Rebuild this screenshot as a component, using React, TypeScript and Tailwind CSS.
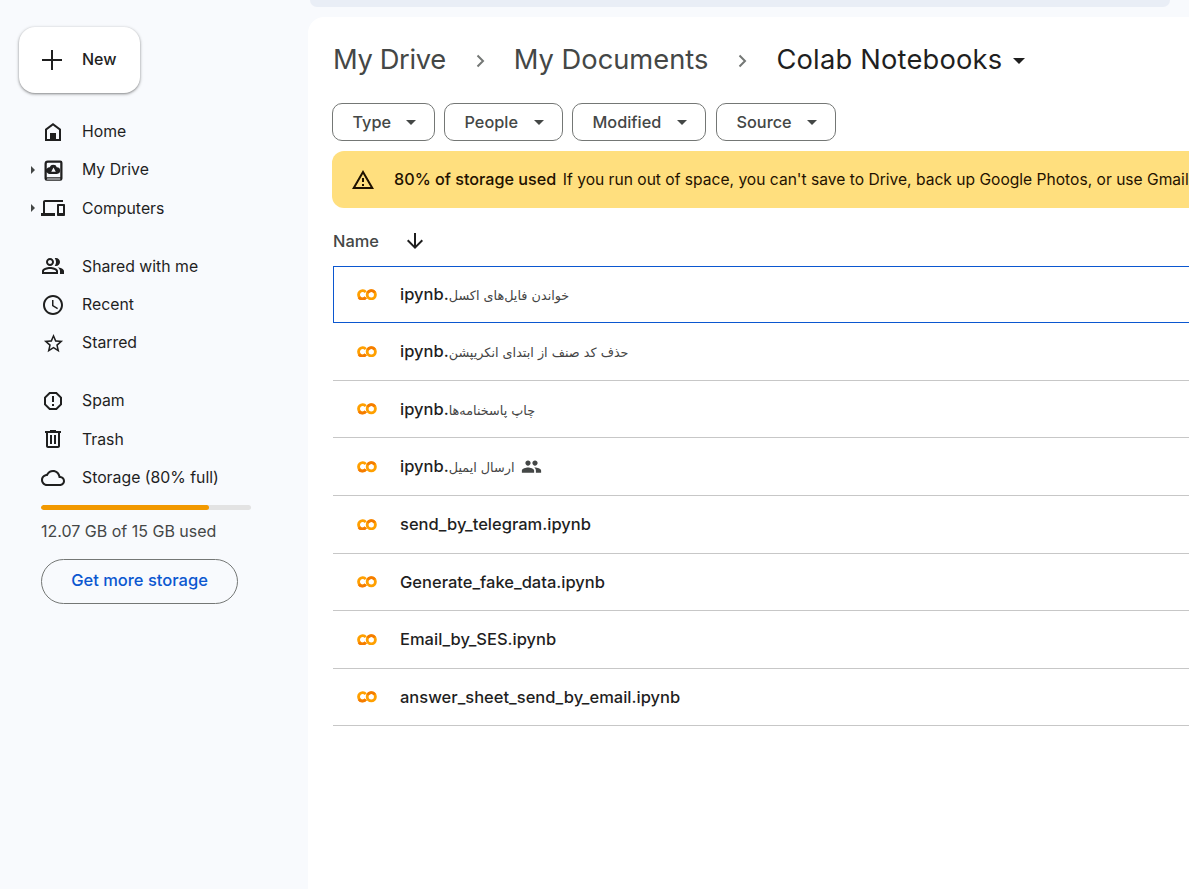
import React from "react";

const I = ({ d, s = 24, cls = "" }: { d: string; s?: number; cls?: string }) => (
  <svg width={s} height={s} viewBox="0 0 24 24" fill="currentColor" className={cls}>
    <path d={d} />
  </svg>
);

const home = "M12 3 4 9v12h16V9l-8-6zm6 16h-3v-6H9v6H6v-9l6-4.5 6 4.5v9z";
const drive = "M7 3h11a2 2 0 0 1 2 2v14a2 2 0 0 1-2 2H6a2 2 0 0 1-2-2V6a3 3 0 0 1 3-3zm-1 15.2c.3-.1.6-.2 1-.2h11V5H7a1 1 0 0 0-1 1v12.2zM7 19.9h11V19H7c-.6 0-.9.4-1 .9h1zM12 7a3 3 0 0 1 2.9 2.2A2.9 2.9 0 0 1 15 15H9a3 3 0 0 1-.4-6A3.4 3.4 0 0 1 12 7zm0 2.4L10 13h4l-2-3.6z";
const computers = "M4 6h18V4H4c-1.1 0-2 .9-2 2v11H0v3h14v-3H4V6zm19 2h-6c-.55 0-1 .45-1 1v10c0 .55.45 1 1 1h6c.55 0 1-.45 1-1V9c0-.55-.45-1-1-1zm-1 9h-4v-7h4v7z";
const shared = "M16.67 13.13C18.04 14.06 19 15.32 19 17v3h4v-3c0-2.18-3.57-3.47-6.33-3.87zM15 12c2.21 0 4-1.79 4-4s-1.79-4-4-4c-.47 0-.91.1-1.33.24C14.5 5.27 15 6.58 15 8s-.5 2.73-1.33 3.76c.42.14.86.24 1.33.24zM9 12c2.21 0 4-1.79 4-4s-1.79-4-4-4-4 1.79-4 4 1.79 4 4 4zm0-6c1.1 0 2 .9 2 2s-.9 2-2 2-2-.9-2-2 .9-2 2-2zM9 13c-2.67 0-8 1.34-8 4v3h16v-3c0-2.66-5.33-4-8-4zm6 5H3v-.99C3.2 16.29 6.3 15 9 15s5.8 1.29 6 2v1z";
const recent = "M11.99 2C6.47 2 2 6.48 2 12s4.47 10 9.99 10C17.52 22 22 17.52 22 12S17.52 2 11.99 2zM12 20c-4.42 0-8-3.58-8-8s3.58-8 8-8 8 3.58 8 8-3.58 8-8 8zm.5-13H11v6l5.25 3.15.75-1.23-4.5-2.67V7z";
const star = "M22 9.24l-7.19-.62L12 2 9.19 8.63 2 9.24l5.46 4.73L5.82 21 12 17.27 18.18 21l-1.63-7.03L22 9.24zM12 15.4l-3.76 2.27 1-4.28-3.32-2.88 4.38-.38L12 6.1l1.71 4.04 4.38.38-3.32 2.88 1 4.28L12 15.4z";
const spam = "M15.73 3H8.27L3 8.27v7.46L8.27 21h7.46L21 15.73V8.27L15.73 3zM19 14.9L14.9 19H9.1L5 14.9V9.1L9.1 5h5.8L19 9.1v5.8zM11 7h2v6h-2zM11 15h2v2h-2z";
const trash = "M15 4V3H9v1H4v2h1v13c0 1.1.9 2 2 2h10c1.1 0 2-.9 2-2V6h1V4h-5zm2 15H7V6h10v13zM9 8h2v9H9zm4 0h2v9h-2z";
const cloud = "M19.35 10.04C18.67 6.59 15.64 4 12 4 9.11 4 6.6 5.64 5.35 8.04 2.34 8.36 0 10.91 0 14c0 3.31 2.69 6 6 6h13c2.76 0 5-2.24 5-5 0-2.64-2.05-4.78-4.65-4.96zM19 18H6c-2.21 0-4-1.79-4-4 0-2.05 1.53-3.76 3.56-3.97l1.07-.11.5-.95C8.08 7.14 9.94 6 12 6c2.62 0 4.88 1.86 5.39 4.43l.3 1.5 1.53.11c1.56.1 2.78 1.41 2.78 2.96 0 1.65-1.35 3-3 3z";
const warn = "M1 21h22L12 2 1 21zm3.47-2L12 5.99 19.53 19H4.47zM11 16h2v2h-2zM11 10h2v4h-2z";
const people = "M16 11c1.66 0 2.99-1.34 2.99-3S17.66 5 16 5c-1.66 0-3 1.34-3 3s1.34 3 3 3zm-8 0c1.66 0 2.99-1.34 2.99-3S9.66 5 8 5C6.34 5 5 6.34 5 8s1.34 3 3 3zm0 2c-2.33 0-7 1.17-7 3.5V19h14v-2.5c0-2.33-4.67-3.5-7-3.5zm8 0c-.29 0-.62.02-.97.05 1.16.84 1.97 1.97 1.97 3.45V19h6v-2.5c0-2.33-4.67-3.5-7-3.5z";

const Caret = ({ cls = "" }: { cls?: string }) => (
  <svg width="10" height="5" viewBox="0 0 10 5" fill="currentColor" className={cls}>
    <path d="M0 0h10L5 5z" />
  </svg>
);

const Colab = () => (
  <svg width="20" height="11.5" viewBox="0 0 21 12" fill="none" strokeWidth="3">
    <path d="M9.2 3.2A4.3 4.3 0 1 0 9.2 8.8" stroke="#ffa000" />
    <circle cx="15" cy="6" r="4.3" stroke="#ffa000" />
    <path d="M11.2 4A4.3 4.3 0 0 1 18.6 3.6" stroke="#f57c00" />
    <path d="M2 8.6A4.3 4.3 0 0 0 9.2 8.8" stroke="#f57c00" />
  </svg>
);

const NavItem = ({ d, label, size = 24, arrow = false }: { d: string; label: string; size?: number; arrow?: boolean }) => (
  <div className="flex items-center h-[38.4px]">
    <div className="w-[11px] ml-[31px] flex items-center">
      {arrow && (
        <svg width="4" height="8" viewBox="0 0 4 8" fill="#444746"><path d="M0 0l4 4-4 4z" /></svg>
      )}
    </div>
    <div className="w-[24px] flex justify-center -ml-[1px] mr-[17px] text-[#1f1f1f]">
      <I d={d} s={size} cls="shrink-0" />
    </div>
    <span className="text-[15.8px] text-[#1f1f1f]">{label}</span>
  </div>
);

const Chip = ({ label, w }: { label: string; w: string }) => (
  <div className={`${w} h-[38px] rounded-[10px] border border-[#747775] flex items-center justify-between pl-[19.5px] pr-[18px] text-[#444746]`}>
    <span className="text-[16.3px] font-medium">{label}</span>
    <Caret />
  </div>
);

const Row = ({ ltr, fa, shared: sh, selected }: { ltr?: string; fa?: string; shared?: boolean; selected?: boolean }) => (
  <div className={`flex items-center w-[1000px] ${selected ? "h-[57.3px] border border-[#0b57d0] pl-[23px]" : "h-[57.6px] border-b border-[#c7c7c7] pl-[24px]"}`}>
    <div className="w-[43px] shrink-0 flex"><Colab /></div>
    {ltr ? (
      <span className="text-[16.5px] font-medium text-[#1f1f1f]">{ltr}</span>
    ) : (
      <span dir="rtl" className="text-[16.5px] font-medium text-[#1f1f1f]">
        <span className="font-normal text-[12.8px] text-[#444]" style={{ fontFamily: "'DejaVu Sans', sans-serif" }}>{fa}</span>.ipynb
      </span>
    )}
    {sh && <I d={people} s={21} cls="ml-[7px] text-[#444746]" />}
  </div>
);

export default function App() {
  return (
    <div className="w-[1189px] h-[889px] overflow-hidden flex bg-[#f8fafd]" style={{ fontFamily: "Inter, Roboto, sans-serif" }}>
      <aside className="w-[308px] shrink-0 flex flex-col">
        <div className="ml-[19px] mt-[27px] w-[121px] h-[66px] rounded-[16px] bg-white shadow-[0_1px_3px_1px_rgba(0,0,0,0.15),0_1px_2px_rgba(0,0,0,0.3)] flex items-center pl-[21px]">
          <svg width="24" height="24" viewBox="0 0 24 24" fill="#1f1f1f"><path d="M11 2h2v9h9v2h-9v9h-2v-9H2v-2h9z" /></svg>
          <span className="ml-[18px] mb-[2px] text-[16px] font-medium text-[#1f1f1f]">New</span>
        </div>
        <div className="mt-[19.5px]">
          <NavItem d={home} label="Home" />
          <NavItem d={drive} label="My Drive" size={27} arrow />
          <NavItem d={computers} label="Computers" arrow />
        </div>
        <div className="mt-[19.5px]">
          <NavItem d={shared} label="Shared with me" />
          <NavItem d={recent} label="Recent" />
          <NavItem d={star} label="Starred" size={23} />
        </div>
        <div className="mt-[19.5px]">
          <NavItem d={spam} label="Spam" />
          <NavItem d={trash} label="Trash" />
          <NavItem d={cloud} label="Storage (80% full)" />
        </div>
        <div className="ml-[41px] mt-[8px] w-[210px] h-[5px] rounded-full bg-[#e3e3e3] overflow-hidden">
          <div className="w-[168px] h-full rounded-full bg-[#f29900]" />
        </div>
        <div className="ml-[41px] mt-[11px] text-[16px] text-[#444746] leading-[20px]">12.07 GB of 15 GB used</div>
        <div className="ml-[41px] mt-[18px] w-[197px] h-[45px] rounded-full border border-[#747775] flex items-center justify-center text-[16.5px] font-medium text-[#0b57d0] pb-[2px]">
          Get more storage
        </div>
      </aside>

      <div className="flex-1 min-w-0 flex flex-col">
        <div className="h-[7px] mr-[19px] ml-[2px] bg-[#e9eef6] rounded-b-[14px]" />
        <div className="h-[10px]" />
        <main className="flex-1 bg-white rounded-tl-[16px] pl-[24px] min-w-0 overflow-hidden">
          <div className="flex items-center h-[72px] pt-[15px] pl-[1px] text-[27.3px] whitespace-nowrap">
            <span className="text-[#444746] tracking-[-0.35px]">My Drive</span>
            <svg width="24" height="24" viewBox="0 0 24 24" fill="none" stroke="#747775" strokeWidth="2" className="ml-[22px] mr-[22px]"><path d="M9.5 6.5 15 12l-5.5 5.5" /></svg>
            <span className="text-[#444746]">My Documents</span>
            <svg width="24" height="24" viewBox="0 0 24 24" fill="none" stroke="#747775" strokeWidth="2" className="ml-[22px] mr-[22px]"><path d="M9.5 6.5 15 12l-5.5 5.5" /></svg>
            <span className="text-[#1f1f1f] tracking-[0.2px]">Colab Notebooks</span>
            <Caret cls="ml-[11px] w-[12px] h-[6px] text-[#1f1f1f]" />
          </div>
          <div className="mt-[14px] flex gap-[9px]">
            <Chip label="Type" w="w-[103px]" />
            <Chip label="People" w="w-[119px]" />
            <Chip label="Modified" w="w-[134px]" />
            <Chip label="Source" w="w-[120px] ml-[1px]" />
          </div>
          <div className="mt-[10px] w-[1000px] h-[57px] rounded-l-[12px] bg-[#ffdf7e] flex items-center pl-[19px] text-[#1f1200] whitespace-nowrap">
            <I d={warn} s={24} />
            <span className="ml-[19px] text-[16.2px] font-medium">80% of storage used</span>
            <span className="ml-[6.5px] text-[15.6px]">If you run out of space, you can't save to Drive, back up Google Photos, or use Gmail.</span>
          </div>
          <div className="h-[58px] pl-[1px] pt-[8px] flex items-center text-[#1f1f1f]">
            <span className="text-[16.4px] font-medium text-[#444746]">Name</span>
            <svg width="24" height="24" viewBox="0 0 24 24" fill="#1f1f1f" className="ml-[24px]"><path d="M11 4h2v12.2l5.6-5.6L20 12l-8 8-8-8 1.4-1.4 5.6 5.6z" /></svg>
          </div>
          <div className="ml-px">
            <Row selected fa="خواندن فایل‌های اکسل" />
            <Row fa="حذف کد صنف از ابتدای انکریپشن" />
            <Row fa="چاپ پاسخنامه‌ها" />
            <Row fa="ارسال ایمیل" shared />
            <Row ltr="send_by_telegram.ipynb" />
            <Row ltr="Generate_fake_data.ipynb" />
            <Row ltr="Email_by_SES.ipynb" />
            <Row ltr="answer_sheet_send_by_email.ipynb" />
          </div>
        </main>
      </div>
    </div>
  );
}
